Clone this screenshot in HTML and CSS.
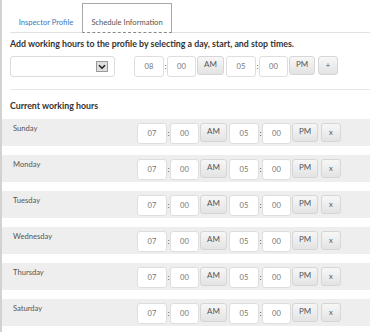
FILE: index.html
```html
<!DOCTYPE html>
<html>
<head>
<meta charset="utf-8">
<link rel="stylesheet" href="styles.css">
</head>
<body>
<div class="page">
  <ul class="tabs">
    <li class="tab"><span class="tab-link">Inspector Profile</span></li>
    <li class="tab active"><span class="tab-link">Schedule Information</span></li>
  </ul>

  <h2 class="title">Add working hours to the profile by selecting a day, start, and stop times.</h2>

  <div class="add-row">
    <div class="select">
      <span class="arrow"><svg width="8" height="6" viewBox="0 0 8 6"><path d="M1 1.2 L4 4.2 L7 1.2" fill="none" stroke="#222" stroke-width="1.6"/></svg></span>
    </div>
    <div class="time">
      <span class="field">08</span><span class="colon">:</span><span class="field min">00</span><span class="btn ampm">AM</span>
      <span class="field start">05</span><span class="colon">:</span><span class="field min">00</span><span class="btn ampm pm">PM</span>
      <span class="btn small">+</span>
    </div>
  </div>

  <div class="divider"></div>

  <h2 class="title sub">Current working hours</h2>

  <div class="day-row">
    <span class="day">Sunday</span>
    <div class="time">
      <span class="field">07</span><span class="colon">:</span><span class="field min">00</span><span class="btn ampm">AM</span>
      <span class="field start">05</span><span class="colon">:</span><span class="field min">00</span><span class="btn ampm pm">PM</span>
      <span class="btn small">x</span>
    </div>
  </div>
  <div class="day-row">
    <span class="day">Monday</span>
    <div class="time">
      <span class="field">07</span><span class="colon">:</span><span class="field min">00</span><span class="btn ampm">AM</span>
      <span class="field start">05</span><span class="colon">:</span><span class="field min">00</span><span class="btn ampm pm">PM</span>
      <span class="btn small">x</span>
    </div>
  </div>
  <div class="day-row">
    <span class="day">Tuesday</span>
    <div class="time">
      <span class="field">07</span><span class="colon">:</span><span class="field min">00</span><span class="btn ampm">AM</span>
      <span class="field start">05</span><span class="colon">:</span><span class="field min">00</span><span class="btn ampm pm">PM</span>
      <span class="btn small">x</span>
    </div>
  </div>
  <div class="day-row">
    <span class="day">Wednesday</span>
    <div class="time">
      <span class="field">07</span><span class="colon">:</span><span class="field min">00</span><span class="btn ampm">AM</span>
      <span class="field start">05</span><span class="colon">:</span><span class="field min">00</span><span class="btn ampm pm">PM</span>
      <span class="btn small">x</span>
    </div>
  </div>
  <div class="day-row">
    <span class="day">Thursday</span>
    <div class="time">
      <span class="field">07</span><span class="colon">:</span><span class="field min">00</span><span class="btn ampm">AM</span>
      <span class="field start">05</span><span class="colon">:</span><span class="field min">00</span><span class="btn ampm pm">PM</span>
      <span class="btn small">x</span>
    </div>
  </div>
  <div class="day-row">
    <span class="day">Saturday</span>
    <div class="time">
      <span class="field">07</span><span class="colon">:</span><span class="field min">00</span><span class="btn ampm">AM</span>
      <span class="field start">05</span><span class="colon">:</span><span class="field min">00</span><span class="btn ampm pm">PM</span>
      <span class="btn small">x</span>
    </div>
  </div>
</div>
</body>
</html>
```

FILE: styles.css
```css
* { box-sizing: border-box; }

html, body {
  margin: 0;
  padding: 0;
  background: #fff;
}

body {
  font-family: Lato, "Open Sans", sans-serif;
  color: #333;
}

.page {
  border-left: 2px solid #d2d2d2;
  padding-left: 8px;
  min-height: 332px;
  overflow: hidden;
}

.tabs {
  list-style: none;
  margin: 0;
  padding: 3px 0 0 0;
  display: flex;
  border-bottom: 1px solid #e2e2e2;
  height: 33px;
}

.tab {
  height: 30px;
  width: 72px;
  margin-bottom: -1px;
  border: 1px solid transparent;
  border-bottom: none;
  text-align: center;
}

.tab-link {
  display: block;
  padding-top: 13px;
  font-size: 7.6px;
  line-height: 11px;
  color: #3a78c0;
  white-space: nowrap;
}

.tab.active {
  width: 90px;
  border: 1px solid #a8a8a8;
  border-bottom: 1px dashed #8a8a8a;
  background: #fff;
}

.tab.active .tab-link {
  color: #555;
}

.title {
  margin: 5px 0 0 0;
  font-size: 8.8px;
  line-height: 12px;
  font-weight: 700;
  color: #333;
  white-space: nowrap;
}

.title.sub {
  margin-top: 10px;
}

.add-row {
  display: flex;
  align-items: flex-start;
  margin-top: 6px;
  height: 21px;
}

.select {
  width: 105px;
  height: 21px;
  border: 1px solid #dcdcdc;
  border-radius: 3px;
  display: flex;
  align-items: center;
  justify-content: flex-end;
  padding-right: 6px;
  margin-right: 19px;
}

.arrow {
  width: 12px;
  height: 11px;
  background: #dedede;
  border: 1px solid #9a9a9a;
  display: flex;
  align-items: center;
  justify-content: center;
}

.arrow svg { display: block; }

.time {
  display: flex;
  align-items: flex-start;
}

.field {
  width: 30px;
  height: 21px;
  border: 1px solid #dedede;
  border-radius: 3px;
  background: #fff;
  font-size: 7.6px;
  line-height: 19px;
  text-align: center;
  color: #777;
}

.field.min { width: 29px; }
.field.start { margin-left: 2px; }

.colon {
  width: 3px;
  height: 21px;
  font-size: 8px;
  line-height: 21px;
  text-align: center;
  color: #444;
}

.btn {
  height: 19px;
  border: 1px solid #d6d6d6;
  border-radius: 3px;
  background: linear-gradient(#f7f7f7, #e3e3e3);
  font-size: 8px;
  line-height: 15px;
  text-align: center;
  color: #555;
  margin-left: 1px;
}

.ampm { width: 27px; }
.ampm.pm { width: 26px; }

.small {
  width: 20px;
  margin-left: 3px;
  line-height: 17px;
  font-size: 7.6px;
}

.divider {
  margin-top: 12px;
  height: 1px;
  background: #e8e8e8;
}

.day-row {
  display: flex;
  align-items: flex-start;
  margin: 7px 0 9px -8px;
  height: 27px;
  padding: 4px 0 0 11px;
  background: #eeeeee;
}

.day {
  width: 124px;
  font-size: 7.6px;
  line-height: 11px;
  color: #555;
}
```
